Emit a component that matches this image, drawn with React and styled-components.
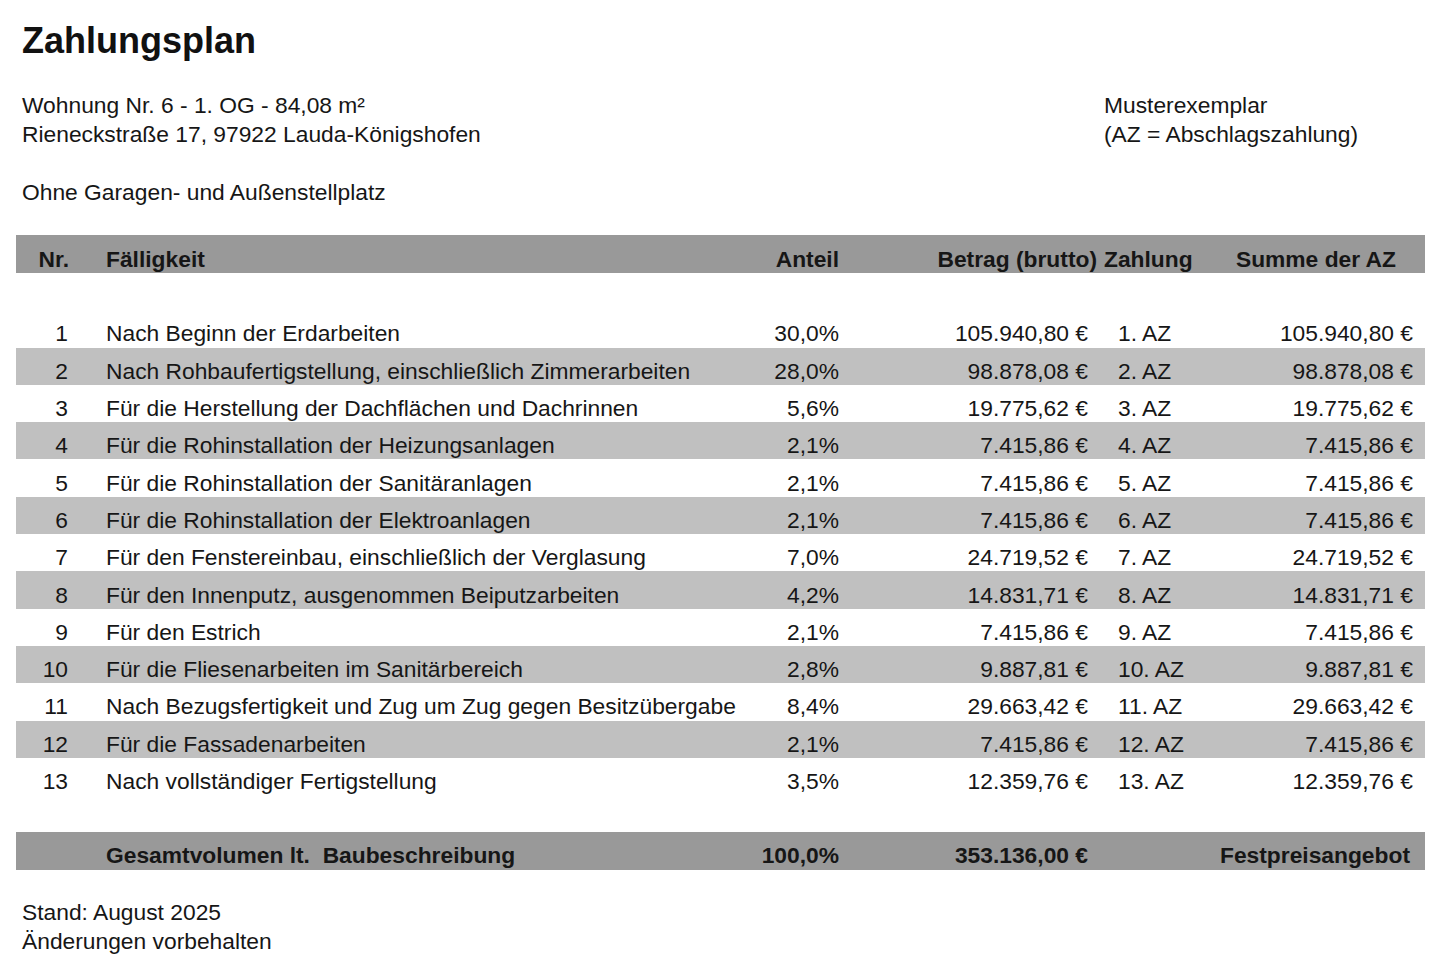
import React from "react";
import styled, { createGlobalStyle } from "styled-components";

const Global = createGlobalStyle`
  html, body { margin: 0; padding: 0; background: #fff; }
  body { font-family: "Liberation Sans", Arial, sans-serif; color: #161616; }
`;

const Page = styled.div`
  width: 1440px;
  height: 963px;
  box-sizing: border-box;
  padding: 0 15px 0 16px;
  background: #fff;
  overflow: hidden;
`;

const Title = styled.h1`
  margin: 19px 0 0 6px;
  font-size: 36px;
  line-height: 44px;
  font-weight: 700;
  color: #111;
`;

const InfoRow = styled.div`
  display: flex;
  justify-content: space-between;
  margin-top: 28px;
  padding-left: 6px;
`;

const Lines = styled.div`
  font-size: 22.8px;
  line-height: 29px;
  width: ${(p) => p.$w || "auto"};
  margin-top: ${(p) => p.$mt || "0"};
`;

const Table = styled.div`
  margin-top: 28px;
  width: 1409px;
  font-size: 22.8px;
`;

const Row = styled.div`
  display: grid;
  grid-template-columns: 84px 660px 79px 259px 102px 225px;
  height: ${(p) => p.$h || "37.3px"};
  background: ${(p) => p.$bg || "transparent"};
  font-weight: ${(p) => (p.$bold ? 700 : 400)};
  align-items: center;
  padding-top: ${(p) => p.$pt || "10px"};
  box-sizing: border-box;
`;

const Cell = styled.div`
  white-space: nowrap;
  text-align: ${(p) => p.$align || "left"};
  padding-left: ${(p) => p.$pl || "0"};
  padding-right: ${(p) => p.$pr || "0"};
  grid-column: ${(p) => p.$span || "auto"};
`;

const Footer = styled.div`
  margin-top: 28px;
  padding-left: 6px;
  font-size: 22.8px;
  line-height: 29px;
`;

const rows = [
  ["1", "Nach Beginn der Erdarbeiten", "30,0%", "105.940,80 €"],
  ["2", "Nach Rohbaufertigstellung, einschließlich Zimmerarbeiten", "28,0%", "98.878,08 €"],
  ["3", "Für die Herstellung der Dachflächen und Dachrinnen", "5,6%", "19.775,62 €"],
  ["4", "Für die Rohinstallation der Heizungsanlagen", "2,1%", "7.415,86 €"],
  ["5", "Für die Rohinstallation der Sanitäranlagen", "2,1%", "7.415,86 €"],
  ["6", "Für die Rohinstallation der Elektroanlagen", "2,1%", "7.415,86 €"],
  ["7", "Für den Fenstereinbau, einschließlich der Verglasung", "7,0%", "24.719,52 €"],
  ["8", "Für den Innenputz, ausgenommen Beiputzarbeiten", "4,2%", "14.831,71 €"],
  ["9", "Für den Estrich", "2,1%", "7.415,86 €"],
  ["10", "Für die Fliesenarbeiten im Sanitärbereich", "2,8%", "9.887,81 €"],
  ["11", "Nach Bezugsfertigkeit und Zug um Zug gegen Besitzübergabe", "8,4%", "29.663,42 €"],
  ["12", "Für die Fassadenarbeiten", "2,1%", "7.415,86 €"],
  ["13", "Nach vollständiger Fertigstellung", "3,5%", "12.359,76 €"],
];

export default function App() {
  return (
    <Page>
      <Global />
      <Title>Zahlungsplan</Title>
      <InfoRow>
        <div>
          <Lines>
            Wohnung Nr. 6 - 1. OG - 84,08 m²
            <br />
            Rieneckstraße 17, 97922 Lauda-Königshofen
          </Lines>
          <Lines $mt="29px">Ohne Garagen- und Außenstellplatz</Lines>
        </div>
        <Lines $w="321px">
          Musterexemplar
          <br />
          (AZ = Abschlagszahlung)
        </Lines>
      </InfoRow>
      <Table>
        <Row $bg="#999999" $bold $h="38px" $pt="11px">
          <Cell $align="right" $pr="31px">Nr.</Cell>
          <Cell $pl="6px">Fälligkeit</Cell>
          <Cell $align="right">Anteil</Cell>
          <Cell $align="right" $pr="1px">Betrag (brutto)</Cell>
          <Cell $pl="6px">Zahlung</Cell>
          <Cell $align="right" $pr="29px">Summe der AZ</Cell>
        </Row>
        <Row />
        {rows.map((r, i) => (
          <Row key={r[0]} $bg={i % 2 === 1 ? "#c0c0c0" : "transparent"}>
            <Cell $align="right" $pr="32px">{r[0]}</Cell>
            <Cell $pl="6px">{r[1]}</Cell>
            <Cell $align="right">{r[2]}</Cell>
            <Cell $align="right" $pr="10px">{r[3]}</Cell>
            <Cell $pl="20px">{r[0]}. AZ</Cell>
            <Cell $align="right" $pr="12px">{r[3]}</Cell>
          </Row>
        ))}
        <Row />
        <Row $bg="#999999" $bold $h="38px" $pt="9px">
          <Cell />
          <Cell $pl="6px">Gesamtvolumen lt.&nbsp; Baubeschreibung</Cell>
          <Cell $align="right">100,0%</Cell>
          <Cell $align="right" $pr="10px">353.136,00 €</Cell>
          <Cell $align="right" $pr="15px" $span="5 / 7">Festpreisangebot</Cell>
        </Row>
      </Table>
      <Footer>
        Stand: August 2025
        <br />
        Änderungen vorbehalten
      </Footer>
    </Page>
  );
}
